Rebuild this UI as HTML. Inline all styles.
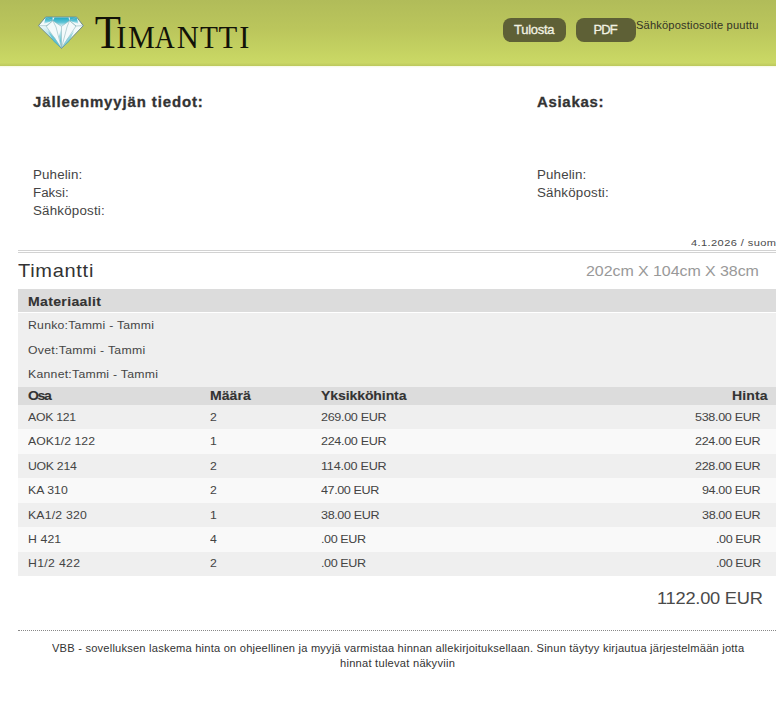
<!DOCTYPE html>
<html><head><meta charset="utf-8"><style>
html,body{margin:0;padding:0;width:776px;height:713px;overflow:hidden;background:#fff;}
body{position:relative;font-family:"Liberation Sans",sans-serif;}
.t{position:absolute;white-space:nowrap;line-height:normal;}
.bl{display:inline-block;width:0;height:0;vertical-align:baseline}
.bg{position:absolute;left:18px;width:758px}
#hdr{position:absolute;left:0;top:0;width:776px;height:66px;background:linear-gradient(#b1bc59,#bbc65c 45%,#c7d563 85%,#cbd866 95%,#bcc85c)}
.btn{position:absolute;top:18px;height:23.5px;background:#5e6036;border-radius:8px}
.lg{position:absolute;font-family:"Liberation Serif",serif;color:#121208;line-height:normal}
</style></head><body>
<div id="hdr"></div><div style="position:absolute;left:0;top:66px;width:776px;height:2px;background:linear-gradient(#f6f9e2,#fff)"></div>
<svg style="position:absolute;left:35px;top:12px" width="52" height="40" viewBox="0 0 52 40">
 <defs>
  <linearGradient id="gt" x1="0" y1="0" x2="0" y2="1"><stop offset="0" stop-color="#1fa9c1"/><stop offset="0.55" stop-color="#5cc3d5"/><stop offset="1" stop-color="#e9f7f9"/></linearGradient>
  <linearGradient id="gb" x1="0" y1="0" x2="0" y2="1"><stop offset="0" stop-color="#eef9fa"/><stop offset="1" stop-color="#22abc3"/></linearGradient>
 </defs>
 <polygon points="3.4,13.7 10.7,5 41.6,5 48.3,13.7 26.5,36.5" fill="#f3fafb" stroke="#6e8c8c" stroke-width="1" stroke-linejoin="round"/>
 <polygon points="10.7,5.2 17.5,5.2 17.8,8.7 9,12" fill="url(#gt)"/>
 <polygon points="19.5,5.4 33.5,5.4 34.5,8.7 26.5,14.4 17.8,8.7" fill="url(#gt)"/>
 <polygon points="41.6,5.2 35,5.2 34.5,8.7 43.5,12" fill="url(#gt)"/>
 <polygon points="5,14.5 11,14 26.3,36" fill="url(#gb)" opacity="0.8"/>
 <polygon points="13,19 20,26 26.3,36 19,30" fill="#4dbdd1" opacity="0.7"/>
 <polygon points="26.5,15 24,24 26.4,36" fill="url(#gb)"/>
 <polygon points="39,19 32,27 26.7,36 34,30" fill="#4dbdd1" opacity="0.6"/>
 <path d="M3.8,13.7 L12,13.7 M17.8,8.7 L26.5,14.4 L34.5,8.7 M10.7,5.3 L17.8,8.7 L11,14 L26.5,36 M41.6,5.3 L34.5,8.7 L41,14 L26.5,36 M26.5,14.4 L26.5,36 M17.8,8.7 L21,15 L26.5,36 M34.5,8.7 L32,15 L26.5,36 M12,14 L17.8,8.7 M41,14 L34.5,8.7 M40,14 L48,13.7" stroke="#8fb8be" stroke-width="0.6" fill="none"/>
</svg>
<span class="lg" style="left:93.65px;top:6px;font-size:45.6px;transform-origin:14.00px 50%;transform:scaleX(0.939)">T</span><span class="lg" style="left:116.10px;top:19px;font-size:32.6px;transform-origin:5.50px 50%;transform:scaleX(0.933)">I</span><span class="lg" style="left:126.85px;top:19px;font-size:32.6px;transform-origin:14.50px 50%;transform:scaleX(0.928)">M</span><span class="lg" style="left:152.80px;top:19px;font-size:32.6px;transform-origin:12.00px 50%;transform:scaleX(0.850)">A</span><span class="lg" style="left:175.90px;top:19px;font-size:32.6px;transform-origin:11.50px 50%;transform:scaleX(0.939)">N</span><span class="lg" style="left:199.00px;top:19px;font-size:32.6px;transform-origin:10.00px 50%;transform:scaleX(0.900)">T</span><span class="lg" style="left:217.70px;top:19px;font-size:32.6px;transform-origin:10.00px 50%;transform:scaleX(0.940)">T</span><span class="lg" style="left:239.00px;top:19px;font-size:32.6px;transform-origin:5.50px 50%;transform:scaleX(0.933)">I</span>
<div class="btn" style="left:503px;width:63px"></div>
<div class="btn" style="left:576px;width:60px"></div>
<div style="position:absolute;left:18px;top:250px;width:758px;height:1px;background:#d2d2d2"></div>
<div style="position:absolute;left:18px;top:252px;width:758px;height:1px;background:#d2d2d2"></div>
<div class="bg" style="top:289px;height:23px;background:#dcdcdc"></div>
<div class="bg" style="top:313px;height:74px;background:#efefef"></div>
<div class="bg" style="top:387px;height:18px;background:#dcdcdc"></div>
<div class="bg" style="top:405px;height:24.40px;background:#efefef"></div><div class="bg" style="top:429.4px;height:24.50px;background:#f9f9f9"></div><div class="bg" style="top:453.9px;height:24.40px;background:#efefef"></div><div class="bg" style="top:478.3px;height:24.40px;background:#f9f9f9"></div><div class="bg" style="top:502.7px;height:24.50px;background:#efefef"></div><div class="bg" style="top:527.2px;height:24.40px;background:#f9f9f9"></div><div class="bg" style="top:551.6px;height:24.40px;background:#efefef"></div>
<div style="position:absolute;left:18px;top:630px;width:758px;height:0;border-top:1px dotted #888"></div>
<div class="t" id="t0" style="left:635.76px;top:20.20px;font-size:10.40px;font-weight:400;color:#333326;letter-spacing:0.155px;transform:scaleX(1.070);transform-origin:0 0">Sähköpostiosoite puuttu<i class="bl"></i></div><div class="t" id="t1" style="left:514.00px;top:22.10px;font-size:13.00px;font-weight:400;color:#f2f2e2;letter-spacing:-0.270px;-webkit-text-stroke:0.3px #f2f2e2">Tulosta<i class="bl"></i></div><div class="t" id="t2" style="left:593.40px;top:22.10px;font-size:13.00px;font-weight:400;color:#f2f2e2;letter-spacing:-0.880px;-webkit-text-stroke:0.3px #f2f2e2">PDF<i class="bl"></i></div><div class="t" id="t3" style="left:33.18px;top:94.00px;font-size:14.40px;font-weight:700;color:#333;letter-spacing:0.845px;-webkit-text-stroke:0.3px #333;transform:scaleX(1.040);transform-origin:0 0">Jälleenmyyjän tiedot:<i class="bl"></i></div><div class="t" id="t4" style="left:537.41px;top:93.90px;font-size:14.40px;font-weight:700;color:#333;letter-spacing:0.665px;-webkit-text-stroke:0.3px #333;transform:scaleX(1.040);transform-origin:0 0">Asiakas:<i class="bl"></i></div><div class="t" id="t5" style="left:33.35px;top:167.70px;font-size:12.48px;font-weight:400;color:#444;letter-spacing:0.124px;transform:scaleX(1.070);transform-origin:0 0">Puhelin:<i class="bl"></i></div><div class="t" id="t6" style="left:33.35px;top:185.60px;font-size:12.48px;font-weight:400;color:#444;letter-spacing:0.018px;transform:scaleX(1.070);transform-origin:0 0">Faksi:<i class="bl"></i></div><div class="t" id="t7" style="left:33.17px;top:203.80px;font-size:12.48px;font-weight:400;color:#444;letter-spacing:0.186px;transform:scaleX(1.070);transform-origin:0 0">Sähköposti:<i class="bl"></i></div><div class="t" id="t8" style="left:536.75px;top:167.50px;font-size:12.48px;font-weight:400;color:#444;letter-spacing:0.124px;transform:scaleX(1.070);transform-origin:0 0">Puhelin:<i class="bl"></i></div><div class="t" id="t9" style="left:537.17px;top:185.80px;font-size:12.48px;font-weight:400;color:#444;letter-spacing:0.186px;transform:scaleX(1.070);transform-origin:0 0">Sähköposti:<i class="bl"></i></div><div class="t" id="t10" style="left:691.09px;top:236.80px;font-size:9.90px;font-weight:400;color:#4a4a4a;letter-spacing:0.360px;transform:scaleX(1.120);transform-origin:0 0">4.1.2026 / suom<i class="bl"></i></div><div class="t" id="t11" style="left:18.35px;top:259.70px;font-size:18.72px;font-weight:400;color:#333;letter-spacing:0.654px;transform:scaleX(1.070);transform-origin:0 0">Timantti<i class="bl"></i></div><div class="t" id="t12" style="left:585.83px;top:263.20px;font-size:14.56px;font-weight:400;color:#999;letter-spacing:-0.068px;transform:scaleX(1.100);transform-origin:0 0">202cm X 104cm X 38cm<i class="bl"></i></div><div class="t" id="t13" style="left:27.55px;top:293.60px;font-size:13.52px;font-weight:700;color:#333;letter-spacing:0.318px;-webkit-text-stroke:0.12px #333;transform:scaleX(1.040);transform-origin:0 0">Materiaalit<i class="bl"></i></div><div class="t" id="t14" style="left:27.84px;top:318.80px;font-size:11.44px;font-weight:400;color:#444;letter-spacing:0.228px;transform:scaleX(1.070);transform-origin:0 0">Runko:Tammi - Tammi<i class="bl"></i></div><div class="t" id="t15" style="left:28.02px;top:344.00px;font-size:11.44px;font-weight:400;color:#444;letter-spacing:0.284px;transform:scaleX(1.070);transform-origin:0 0">Ovet:Tammi - Tammi<i class="bl"></i></div><div class="t" id="t16" style="left:27.84px;top:367.80px;font-size:11.44px;font-weight:400;color:#444;letter-spacing:0.244px;transform:scaleX(1.070);transform-origin:0 0">Kannet:Tammi - Tammi<i class="bl"></i></div><div class="t" id="t17" style="left:28.16px;top:388.20px;font-size:13.52px;font-weight:700;color:#333;letter-spacing:-1.316px;-webkit-text-stroke:0.12px #333;transform:scaleX(1.040);transform-origin:0 0">Osa<i class="bl"></i></div><div class="t" id="t18" style="left:209.70px;top:388.20px;font-size:13.52px;font-weight:700;color:#333;letter-spacing:0.018px;-webkit-text-stroke:0.12px #333;transform:scaleX(1.040);transform-origin:0 0">Määrä<i class="bl"></i></div><div class="t" id="t19" style="left:321.27px;top:388.20px;font-size:13.52px;font-weight:700;color:#333;letter-spacing:-0.106px;-webkit-text-stroke:0.12px #333;transform:scaleX(1.040);transform-origin:0 0">Yksikköhinta<i class="bl"></i></div><div class="t" id="t20" style="left:731.55px;top:388.20px;font-size:13.52px;font-weight:700;color:#333;letter-spacing:0.111px;-webkit-text-stroke:0.12px #333;transform:scaleX(1.040);transform-origin:0 0">Hinta<i class="bl"></i></div><div class="t" id="t21" style="left:657.20px;top:588.70px;font-size:16.64px;font-weight:400;color:#4a4a4a;letter-spacing:-0.222px;transform:scaleX(1.100);transform-origin:0 0">1122.00 EUR<i class="bl"></i></div><div class="t" id="t22" style="left:51.52px;top:642.90px;font-size:10.40px;font-weight:400;color:#333;letter-spacing:0.195px;transform:scaleX(1.070);transform-origin:0 0">VBB - sovelluksen laskema hinta on ohjeellinen ja myyjä varmistaa hinnan allekirjoituksellaan. Sinun täytyy kirjautua järjestelmään jotta<i class="bl"></i></div><div class="t" id="t23" style="left:340.29px;top:657.70px;font-size:10.40px;font-weight:400;color:#333;letter-spacing:0.232px;transform:scaleX(1.070);transform-origin:0 0">hinnat tulevat näkyviin<i class="bl"></i></div><div class="t" id="t24" style="left:28.04px;top:410.90px;font-size:11.44px;font-weight:400;color:#444;letter-spacing:-0.258px;transform:scaleX(1.070);transform-origin:0 0">AOK 121<i class="bl"></i></div><div class="t" id="t25" style="left:209.59px;top:410.90px;font-size:11.44px;font-weight:400;color:#444;letter-spacing:0.000px;transform:scaleX(1.070);transform-origin:0 0">2<i class="bl"></i></div><div class="t" id="t26" style="left:321.49px;top:410.90px;font-size:11.44px;font-weight:400;color:#444;letter-spacing:-0.299px;transform:scaleX(1.100);transform-origin:0 0">269.00 EUR<i class="bl"></i></div><div class="t" id="t27" style="left:695.37px;top:410.90px;font-size:11.44px;font-weight:400;color:#444;letter-spacing:-0.302px;transform:scaleX(1.100);transform-origin:0 0">538.00 EUR<i class="bl"></i></div><div class="t" id="t28" style="left:28.04px;top:435.33px;font-size:11.44px;font-weight:400;color:#444;letter-spacing:0.035px;transform:scaleX(1.070);transform-origin:0 0">AOK1/2 122<i class="bl"></i></div><div class="t" id="t29" style="left:209.52px;top:435.33px;font-size:11.44px;font-weight:400;color:#444;letter-spacing:0.000px;transform:scaleX(1.070);transform-origin:0 0">1<i class="bl"></i></div><div class="t" id="t30" style="left:321.49px;top:435.33px;font-size:11.44px;font-weight:400;color:#444;letter-spacing:-0.299px;transform:scaleX(1.100);transform-origin:0 0">224.00 EUR<i class="bl"></i></div><div class="t" id="t31" style="left:694.62px;top:435.33px;font-size:11.44px;font-weight:400;color:#444;letter-spacing:-0.299px;transform:scaleX(1.100);transform-origin:0 0">224.00 EUR<i class="bl"></i></div><div class="t" id="t32" style="left:27.82px;top:459.76px;font-size:11.44px;font-weight:400;color:#444;letter-spacing:-0.250px;transform:scaleX(1.070);transform-origin:0 0">UOK 214<i class="bl"></i></div><div class="t" id="t33" style="left:209.59px;top:459.76px;font-size:11.44px;font-weight:400;color:#444;letter-spacing:0.000px;transform:scaleX(1.070);transform-origin:0 0">2<i class="bl"></i></div><div class="t" id="t34" style="left:321.37px;top:459.76px;font-size:11.44px;font-weight:400;color:#444;letter-spacing:-0.193px;transform:scaleX(1.100);transform-origin:0 0">114.00 EUR<i class="bl"></i></div><div class="t" id="t35" style="left:694.62px;top:459.76px;font-size:11.44px;font-weight:400;color:#444;letter-spacing:-0.299px;transform:scaleX(1.100);transform-origin:0 0">228.00 EUR<i class="bl"></i></div><div class="t" id="t36" style="left:27.69px;top:484.19px;font-size:11.44px;font-weight:400;color:#444;letter-spacing:0.046px;transform:scaleX(1.070);transform-origin:0 0">KA 310<i class="bl"></i></div><div class="t" id="t37" style="left:209.59px;top:484.19px;font-size:11.44px;font-weight:400;color:#444;letter-spacing:0.000px;transform:scaleX(1.070);transform-origin:0 0">2<i class="bl"></i></div><div class="t" id="t38" style="left:321.21px;top:484.19px;font-size:11.44px;font-weight:400;color:#444;letter-spacing:-0.375px;transform:scaleX(1.100);transform-origin:0 0">47.00 EUR<i class="bl"></i></div><div class="t" id="t39" style="left:702.49px;top:484.19px;font-size:11.44px;font-weight:400;color:#444;letter-spacing:-0.345px;transform:scaleX(1.100);transform-origin:0 0">94.00 EUR<i class="bl"></i></div><div class="t" id="t40" style="left:27.69px;top:508.62px;font-size:11.44px;font-weight:400;color:#444;letter-spacing:0.185px;transform:scaleX(1.070);transform-origin:0 0">KA1/2 320<i class="bl"></i></div><div class="t" id="t41" style="left:209.52px;top:508.62px;font-size:11.44px;font-weight:400;color:#444;letter-spacing:0.000px;transform:scaleX(1.070);transform-origin:0 0">1<i class="bl"></i></div><div class="t" id="t42" style="left:321.36px;top:508.62px;font-size:11.44px;font-weight:400;color:#444;letter-spacing:-0.338px;transform:scaleX(1.100);transform-origin:0 0">38.00 EUR<i class="bl"></i></div><div class="t" id="t43" style="left:702.36px;top:508.62px;font-size:11.44px;font-weight:400;color:#444;letter-spacing:-0.338px;transform:scaleX(1.100);transform-origin:0 0">38.00 EUR<i class="bl"></i></div><div class="t" id="t44" style="left:27.69px;top:533.05px;font-size:11.44px;font-weight:400;color:#444;letter-spacing:0.111px;transform:scaleX(1.070);transform-origin:0 0">H 421<i class="bl"></i></div><div class="t" id="t45" style="left:210.36px;top:533.05px;font-size:11.44px;font-weight:400;color:#444;letter-spacing:0.000px;transform:scaleX(1.070);transform-origin:0 0">4<i class="bl"></i></div><div class="t" id="t46" style="left:320.99px;top:533.05px;font-size:11.44px;font-weight:400;color:#444;letter-spacing:-0.381px;transform:scaleX(1.100);transform-origin:0 0">.00 EUR<i class="bl"></i></div><div class="t" id="t47" style="left:715.84px;top:533.05px;font-size:11.44px;font-weight:400;color:#444;letter-spacing:-0.381px;transform:scaleX(1.100);transform-origin:0 0">.00 EUR<i class="bl"></i></div><div class="t" id="t48" style="left:27.69px;top:557.48px;font-size:11.44px;font-weight:400;color:#444;letter-spacing:0.321px;transform:scaleX(1.070);transform-origin:0 0">H1/2 422<i class="bl"></i></div><div class="t" id="t49" style="left:209.59px;top:557.48px;font-size:11.44px;font-weight:400;color:#444;letter-spacing:0.000px;transform:scaleX(1.070);transform-origin:0 0">2<i class="bl"></i></div><div class="t" id="t50" style="left:320.99px;top:557.48px;font-size:11.44px;font-weight:400;color:#444;letter-spacing:-0.381px;transform:scaleX(1.100);transform-origin:0 0">.00 EUR<i class="bl"></i></div><div class="t" id="t51" style="left:715.84px;top:557.48px;font-size:11.44px;font-weight:400;color:#444;letter-spacing:-0.381px;transform:scaleX(1.100);transform-origin:0 0">.00 EUR<i class="bl"></i></div>
</body></html>
